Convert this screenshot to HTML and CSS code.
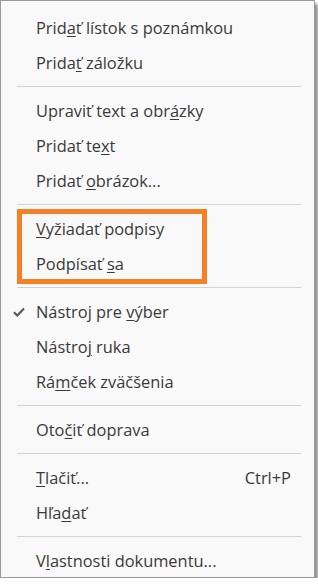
FILE: index.html
```html
<!DOCTYPE html>
<html lang="sk">
<head>
<meta charset="utf-8">
<link rel="stylesheet" href="styles.css">
</head>
<body>
<div class="menu">
  <div class="item">Prid<u>a</u>ť lístok s poznámkou</div>
  <div class="item">Prida<u>ť</u> záložku</div>
  <div class="sep"></div>
  <div class="item">Upraviť text a obr<u>á</u>zky</div>
  <div class="item">Pridať te<u>x</u>t</div>
  <div class="item">Pridať <u>o</u>brázok...</div>
  <div class="sep"></div>
  <div class="group">
    <div class="item"><u>V</u>yžiadať podpisy</div>
    <div class="item">Podpísať <u>s</u>a</div>
    <div class="highlight"></div>
  </div>
  <div class="sep"></div>
  <div class="item"><svg class="check" width="12" height="10" viewBox="0 0 12 10"><path d="M1 5.2 L4.3 8.5 L11 1.5" fill="none" stroke="#5a5a5a" stroke-width="2.2"/></svg>Nástroj pre <u>v</u>ýber</div>
  <div class="item">Nástro<u>j</u> ruka</div>
  <div class="item">Rá<u>m</u>ček zväčšenia</div>
  <div class="sep"></div>
  <div class="item">Oto<u>č</u>iť doprava</div>
  <div class="sep"></div>
  <div class="item"><span class="shortcut">Ctrl+P</span><u>T</u>lačiť...</div>
  <div class="item">Hľa<u>d</u>ať</div>
  <div class="sep"></div>
  <div class="item">V<u>l</u>astnosti dokumentu...</div>
</div>
</body>
</html>
```
FILE: styles.css
```css
html, body {
  margin: 0;
  padding: 0;
  background: #ffffff;
}
.menu {
  box-sizing: border-box;
  width: 315px;
  height: 578px;
  border: 1px solid #9a9a9a;
  background: #f9f9f9;
  box-shadow: 3px 4px 3px rgba(0, 0, 0, 0.45);
  padding: 9px 0 0 0;
  font-family: "Open Sans", "Noto Sans", sans-serif;
  font-size: 16.4px;
  color: #3a3a3a;
}
.item {
  position: relative;
  height: 35px;
  line-height: 35px;
  padding-left: 35px;
  padding-right: 23px;
  white-space: nowrap;
}
.item u {
  text-decoration-thickness: 1px;
  text-underline-offset: 2px;
}
.shortcut {
  float: right;
}
.sep {
  height: 13px;
  display: flex;
  align-items: center;
  margin: 0 13px 0 16px;
}
.sep::before {
  content: "";
  flex: 1;
  height: 1px;
  background: #d3d3d3;
}
.group {
  position: relative;
}
.highlight {
  position: absolute;
  left: 16px;
  top: -2px;
  width: 190px;
  height: 75px;
  box-sizing: border-box;
  border: 5px solid #f58025;
}
.check {
  position: absolute;
  left: 12px;
  top: 13px;
}
```
